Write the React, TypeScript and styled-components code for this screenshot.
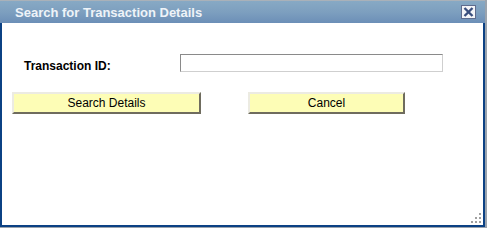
import * as React from 'react';
import styled, {createGlobalStyle} from 'styled-components';

const GlobalStyle = createGlobalStyle`
    html, body {
        margin: 0;
        padding: 0;
        background: #9aa3ad;
    }
    body {
        font-family: "Liberation Sans", Arial, sans-serif;
    }
`;

const Dialog = styled.div`
    width: 485px;
    height: 227px;
    display: flex;
    flex-direction: column;
`;

const TitleBar = styled.div`
    height: 22px;
    border-top: 1px solid #a9b1b9;
    background: linear-gradient(to bottom, #87a9c4 0%, #7d9fbf 50%, #6c8fb7 100%);
    display: flex;
    align-items: center;
    justify-content: space-between;
    padding: 0 9px 0 15px;
`;

const Title = styled.span`
    color: #eef3f8;
    font-weight: bold;
    font-size: 13px;
`;

const CloseButton = styled.button`
    width: 15px;
    height: 14px;
    padding: 0;
    border: 1px solid #5f6c8e;
    background: #f4f5f8;
    display: flex;
    align-items: center;
    justify-content: center;
    cursor: pointer;
`;

const Body = styled.div`
    flex: 1;
    position: relative;
    background: #fff;
    border-left: 2px solid #0b4184;
    border-right: 2px solid #0b4184;
    border-bottom: 2px solid #0b4184;
    padding: 31px 0 0 10px;
`;

const FieldRow = styled.div`
    display: flex;
    align-items: center;
    height: 18px;
`;

const Label = styled.label`
    width: 156px;
    margin-left: 12px;
    font-weight: bold;
    font-size: 12px;
    color: #000;
    padding-top: 5px;
`;

const TextInput = styled.input`
    box-sizing: border-box;
    width: 263px;
    height: 18px;
    border-top: 1px solid #8a8a8a;
    border-left: 1px solid #8a8a8a;
    border-bottom: 1px solid #cfcfcf;
    border-right: 1px solid #cfcfcf;
    outline: none;
    padding: 0 3px;
    font-size: 12px;
`;

const ButtonRow = styled.div`
    display: flex;
    gap: 47px;
    margin-top: 20px;
`;

const YellowButton = styled.button<{$width: number}>`
    box-sizing: border-box;
    width: ${p => p.$width}px;
    height: 22px;
    background: #fdfdb6;
    border-top: 2px solid #ecebe2;
    border-left: 2px solid #ecebe2;
    border-bottom: 2px solid #6f6c5e;
    border-right: 2px solid #6f6c5e;
    font-family: "Liberation Sans", Arial, sans-serif;
    font-size: 12px;
    color: #000;
    padding: 0;
    cursor: pointer;
`;

const Grip = styled.svg`
    position: absolute;
    right: 1px;
    bottom: 1px;
`;

export default function App() {
    return <>
        <GlobalStyle />
        <Dialog>
            <TitleBar>
                <Title>Search for Transaction Details</Title>
                <CloseButton aria-label="Close">
                    <svg width="11" height="10" viewBox="0 0 11 10">
                        <path d="M1.5 1 L9.5 9 M9.5 1 L1.5 9" stroke="#3a4f7e" strokeWidth="2.4" />
                    </svg>
                </CloseButton>
            </TitleBar>
            <Body>
                <FieldRow>
                    <Label htmlFor="txid">Transaction ID:</Label>
                    <TextInput id="txid" type="text" />
                </FieldRow>
                <ButtonRow>
                    <YellowButton $width={189}>Search Details</YellowButton>
                    <YellowButton $width={157}>Cancel</YellowButton>
                </ButtonRow>
                <Grip width="12" height="12" viewBox="0 0 12 12">
                    <g fill="#a0a0a0">
                        <rect x="9" y="1" width="2" height="2" />
                        <rect x="5" y="5" width="2" height="2" />
                        <rect x="9" y="5" width="2" height="2" />
                        <rect x="1" y="9" width="2" height="2" />
                        <rect x="5" y="9" width="2" height="2" />
                        <rect x="9" y="9" width="2" height="2" />
                    </g>
                </Grip>
            </Body>
        </Dialog>
    </>;
}
